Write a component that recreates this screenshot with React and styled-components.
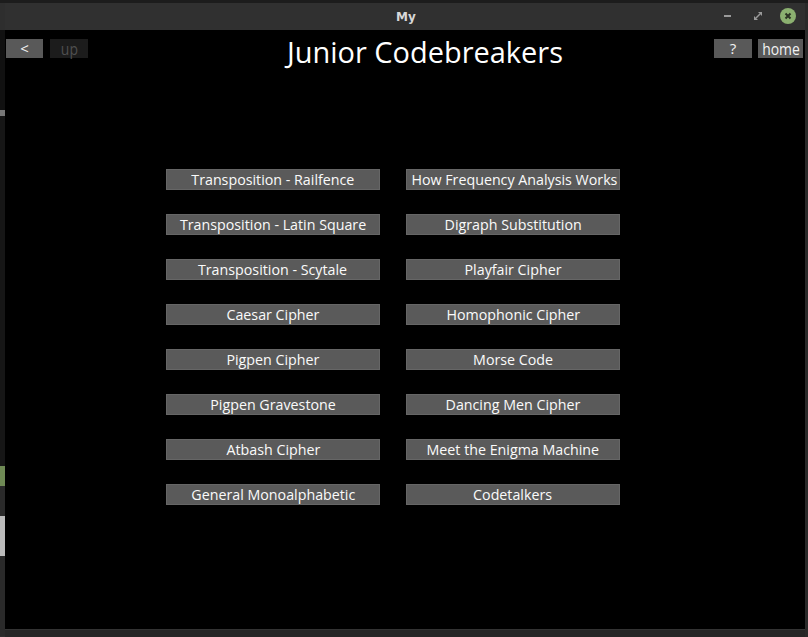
import React from "react";
import styled, { createGlobalStyle } from "styled-components";

const Global = createGlobalStyle`
  html, body { margin: 0; padding: 0; background: #2b2b2b; }
  body { width: 808px; height: 637px; overflow: hidden; font-family: "Open Sans", "DejaVu Sans", sans-serif; }
`;

const Desktop = styled.div`
  width: 808px;
  height: 637px;
  display: flex;
  flex-direction: column;
  background: #262626;
`;

const TopStrip = styled.div`
  height: 3px;
  background: #1c1c1c;
`;

const Middle = styled.div`
  display: flex;
  flex: 1;
`;

const LeftStrip = styled.div`
  width: 5px;
  background: #2f2f2f;
  display: flex;
  flex-direction: column;
`;

const StripBit = styled.div`
  height: ${(p) => p.h}px;
  background: ${(p) => p.c};
`;

const Window = styled.div`
  width: 800px;
  display: flex;
  flex-direction: column;
`;

const TitleBar = styled.div`
  height: 27px;
  background: #303030;
  display: flex;
  align-items: center;
  position: relative;
`;

const TitleText = styled.div`
  flex: 1;
  text-align: center;
  font-family: "DejaVu Sans", sans-serif;
  font-weight: bold;
  font-size: 12px;
  color: #d8d8d8;
  padding-left: 2px;
`;

const Controls = styled.div`
  position: absolute;
  right: 9px;
  top: 5px;
  display: flex;
  align-items: center;
  gap: 14px;
`;

const Ctl = styled.div`
  width: 16px;
  height: 16px;
  display: flex;
  align-items: center;
  justify-content: center;
`;

const CloseBtn = styled.div`
  width: 16px;
  height: 16px;
  border-radius: 50%;
  background: #8bb070;
  display: flex;
  align-items: center;
  justify-content: center;
`;

const Content = styled.div`
  height: 599px;
  background: #000;
  display: flex;
  flex-direction: column;
`;

const Header = styled.div`
  display: flex;
  align-items: flex-start;
  padding: 9px 2px 0 1px;
  height: 36px;
`;

const Group = styled.div`
  display: flex;
  gap: ${(p) => p.gap}px;
`;

const TopBtn = styled.div`
  height: 19px;
  width: ${(p) => p.w}px;
  background: ${(p) => (p.dim ? "#1c1c1c" : "#595959")};
  color: ${(p) => (p.dim ? "#4f4f4f" : "#f2f2f2")};
  font-family: "Open Sans", sans-serif;
  font-size: 15px;
  line-height: 19px;
  text-align: center;
  white-space: nowrap;
  display: flex;
  align-items: center;
  justify-content: center;
`;

const TopLabel = styled.span`
  display: inline-block;
  font-size: 17px;
  line-height: 17px;
  transform: scaleX(0.82);
`;

const Title = styled.div`
  flex: 1;
  text-align: center;
  color: #fff;
  font-family: "Open Sans", sans-serif;
  font-size: 30px;
  line-height: 30px;
  margin-top: -2px;
  padding-left: 48px;
`;

const TitleInner = styled.span`
  display: inline-block;
  transform: scaleX(0.965);
`;

const Grid = styled.div`
  display: grid;
  grid-template-columns: 214px 214px;
  column-gap: 26px;
  row-gap: 24px;
  padding-left: 161px;
  margin-top: 94px;
`;

const MenuBtn = styled.div`
  height: 21px;
  background: #5a5a5a;
  box-shadow: inset 0 0 0 1px #666;
  color: #fafafa;
  font-family: "Open Sans", sans-serif;
  font-size: 15px;
  line-height: 21px;
  text-align: center;
  white-space: nowrap;
`;

const MenuLabel = styled.span`
  display: inline-block;
  transform: scaleX(0.95);
`;

const BottomStrip = styled.div`
  flex: 1;
  background: #262626;
  border-top: 1px solid #333;
`;

const RightEdge = styled.div`
  width: 3px;
  background: #2a2a2a;
`;

const left = [
  "Transposition - Railfence",
  "Transposition - Latin Square",
  "Transposition - Scytale",
  "Caesar Cipher",
  "Pigpen Cipher",
  "Pigpen Gravestone",
  "Atbash Cipher",
  "General Monoalphabetic",
];
const right = [
  "How Frequency Analysis Works",
  "Digraph Substitution",
  "Playfair Cipher",
  "Homophonic Cipher",
  "Morse Code",
  "Dancing Men Cipher",
  "Meet the Enigma Machine",
  "Codetalkers",
];

export default function App() {
  const items = [];
  left.forEach((l, i) => {
    items.push(
      <MenuBtn key={"l" + i}>
        <MenuLabel>{l}</MenuLabel>
      </MenuBtn>
    );
    items.push(
      <MenuBtn key={"r" + i}>
        <MenuLabel>{right[i]}</MenuLabel>
      </MenuBtn>
    );
  });
  return (
    <>
      <Global />
      <Desktop>
        <TopStrip />
        <Middle>
          <LeftStrip>
            <StripBit h={27} c="#2e2e2e" />
            <StripBit h={80} c="#111" />
            <StripBit h={6} c="#777" />
            <StripBit h={350} c="#161616" />
            <StripBit h={20} c="#6f8a55" />
            <StripBit h={30} c="#2a2a2a" />
            <StripBit h={40} c="#bbb" />
            <StripBit h={80} c="#2a2a2a" />
          </LeftStrip>
          <Window>
            <TitleBar>
              <TitleText>My</TitleText>
              <Controls>
                <Ctl>
                  <svg width="10" height="10" viewBox="0 0 10 10">
                    <rect x="1" y="4" width="7" height="2" fill="#9a9a9a" />
                  </svg>
                </Ctl>
                <Ctl>
                  <svg width="10" height="10" viewBox="0 0 10 10">
                    <path d="M5 1 H9 V5 Z" fill="#9a9a9a" />
                    <path d="M1 5 V9 H5 Z" fill="#9a9a9a" />
                    <path d="M3 7 L7 3" stroke="#9a9a9a" strokeWidth="1.5" />
                  </svg>
                </Ctl>
                <CloseBtn>
                  <svg width="10" height="10" viewBox="0 0 10 10">
                    <path d="M2.5 2.5 L7.5 7.5 M7.5 2.5 L2.5 7.5" stroke="#2b3324" strokeWidth="2" />
                  </svg>
                </CloseBtn>
              </Controls>
            </TitleBar>
            <Content>
              <Header>
                <Group gap={7}>
                  <TopBtn w={37}>&lt;</TopBtn>
                  <TopBtn w={38} dim>
                    <TopLabel>up</TopLabel>
                  </TopBtn>
                </Group>
                <Title>
                  <TitleInner>Junior Codebreakers</TitleInner>
                </Title>
                <Group gap={6}>
                  <TopBtn w={38}>?</TopBtn>
                  <TopBtn w={45}>
                    <TopLabel>home</TopLabel>
                  </TopBtn>
                </Group>
              </Header>
              <Grid>{items}</Grid>
            </Content>
            <BottomStrip />
          </Window>
          <RightEdge />
        </Middle>
      </Desktop>
    </>
  );
}
